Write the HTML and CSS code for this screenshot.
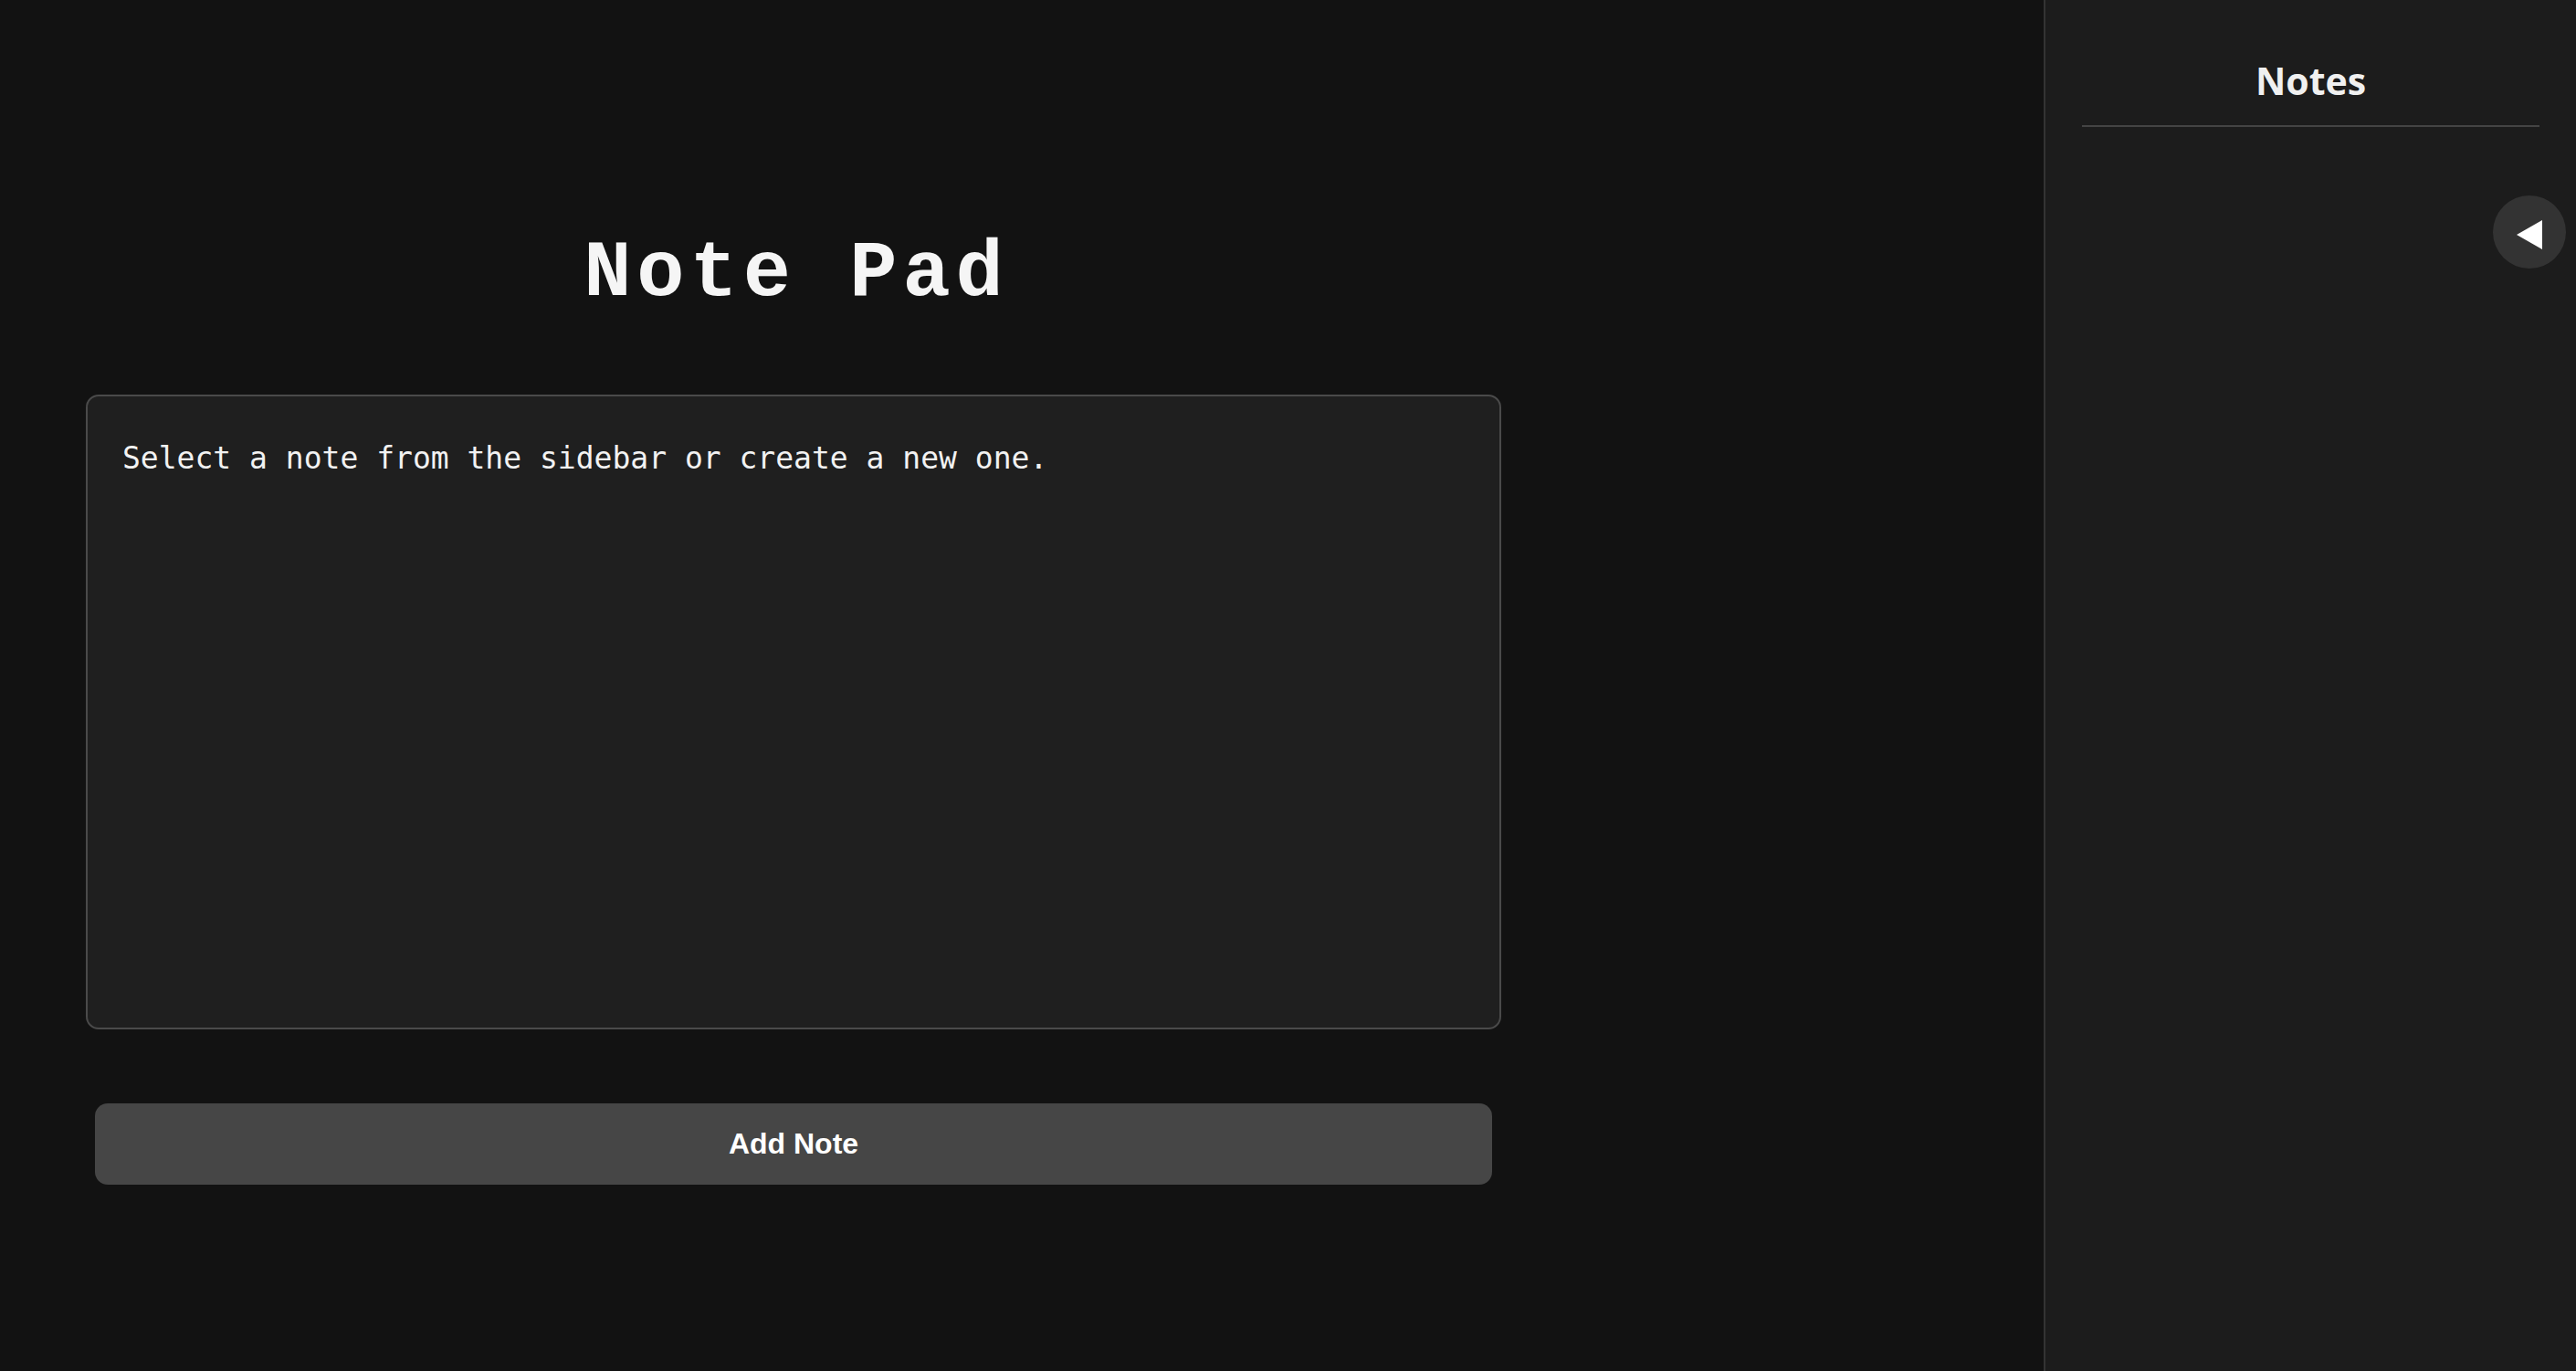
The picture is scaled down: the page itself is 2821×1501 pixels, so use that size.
FILE: index.html
```html
<!DOCTYPE html>
<html lang="en">
<head>
<meta charset="utf-8">
<title>Note Pad</title>
<link rel="stylesheet" href="styles.css">
</head>
<body>
<main class="main">
  <div class="column">
    <h1 class="title">Note Pad</h1>
    <textarea class="editor" placeholder="Select a note from the sidebar or create a new one."></textarea>
    <button class="add-btn" type="button">Add Note</button>
  </div>
</main>
<aside class="sidebar">
  <h2 class="sidebar-title">Notes</h2>
  <ul class="note-list"></ul>
  <button class="toggle" type="button" aria-label="Toggle sidebar">
    <svg width="80" height="80" viewBox="0 0 80 80"><polygon points="26,43 54,27 54,59" fill="#ffffff"/></svg>
  </button>
</aside>
</body>
</html>
```
FILE: styles.css
```css
html, body {
  margin: 0;
  padding: 0;
  height: 100%;
}
body {
  display: flex;
  background: #121212;
  color: #eeeeee;
  min-height: 1501px;
  overflow: hidden;
}
.main {
  flex: 1;
  padding: 251px 0 0 94px;
}
.column {
  width: 1550px;
  display: flex;
  flex-direction: column;
}
.title {
  margin: 0;
  padding-left: 6px;
  text-align: center;
  font-family: "Liberation Mono", "Courier New", monospace;
  font-weight: bold;
  font-size: 87px;
  letter-spacing: 6px;
  line-height: normal;
  color: #f5f5f5;
}
.editor {
  margin-top: 83px;
  box-sizing: border-box;
  width: 100%;
  height: 695px;
  padding: 48px 38px;
  background: #1f1f1f;
  border: 2px solid #4a4a4a;
  border-radius: 14px;
  color: #eeeeee;
  font-family: "DejaVu Sans Mono", monospace;
  font-size: 33px;
  line-height: 40px;
  resize: none;
  outline: none;
}
.editor::placeholder {
  color: #f2f2f2;
  opacity: 1;
}
.add-btn {
  margin: 81px 10px 0;
  height: 89px;
  border: none;
  border-radius: 14px;
  background: #464646;
  color: #ffffff;
  font-family: "Liberation Sans", Arial, sans-serif;
  font-weight: bold;
  font-size: 32px;
  cursor: pointer;
}
.sidebar {
  position: relative;
  width: 501px;
  padding: 0 40px;
  background: #1c1c1c;
  border-left: 2px solid #333333;
}
.sidebar-title {
  margin: 60px 0 0;
  padding-bottom: 21px;
  border-bottom: 2px solid #444444;
  text-align: center;
  font-family: "Open Sans", "Noto Sans", sans-serif;
  font-weight: bold;
  font-size: 41px;
  line-height: normal;
  color: #f0f0f0;
}
.note-list {
  list-style: none;
  margin: 0;
  padding: 0;
}
.toggle {
  position: absolute;
  top: 214px;
  right: 11px;
  width: 80px;
  height: 80px;
  padding: 0;
  border: none;
  border-radius: 50%;
  background: #333333;
  cursor: pointer;
}
.toggle svg {
  display: block;
}
```
